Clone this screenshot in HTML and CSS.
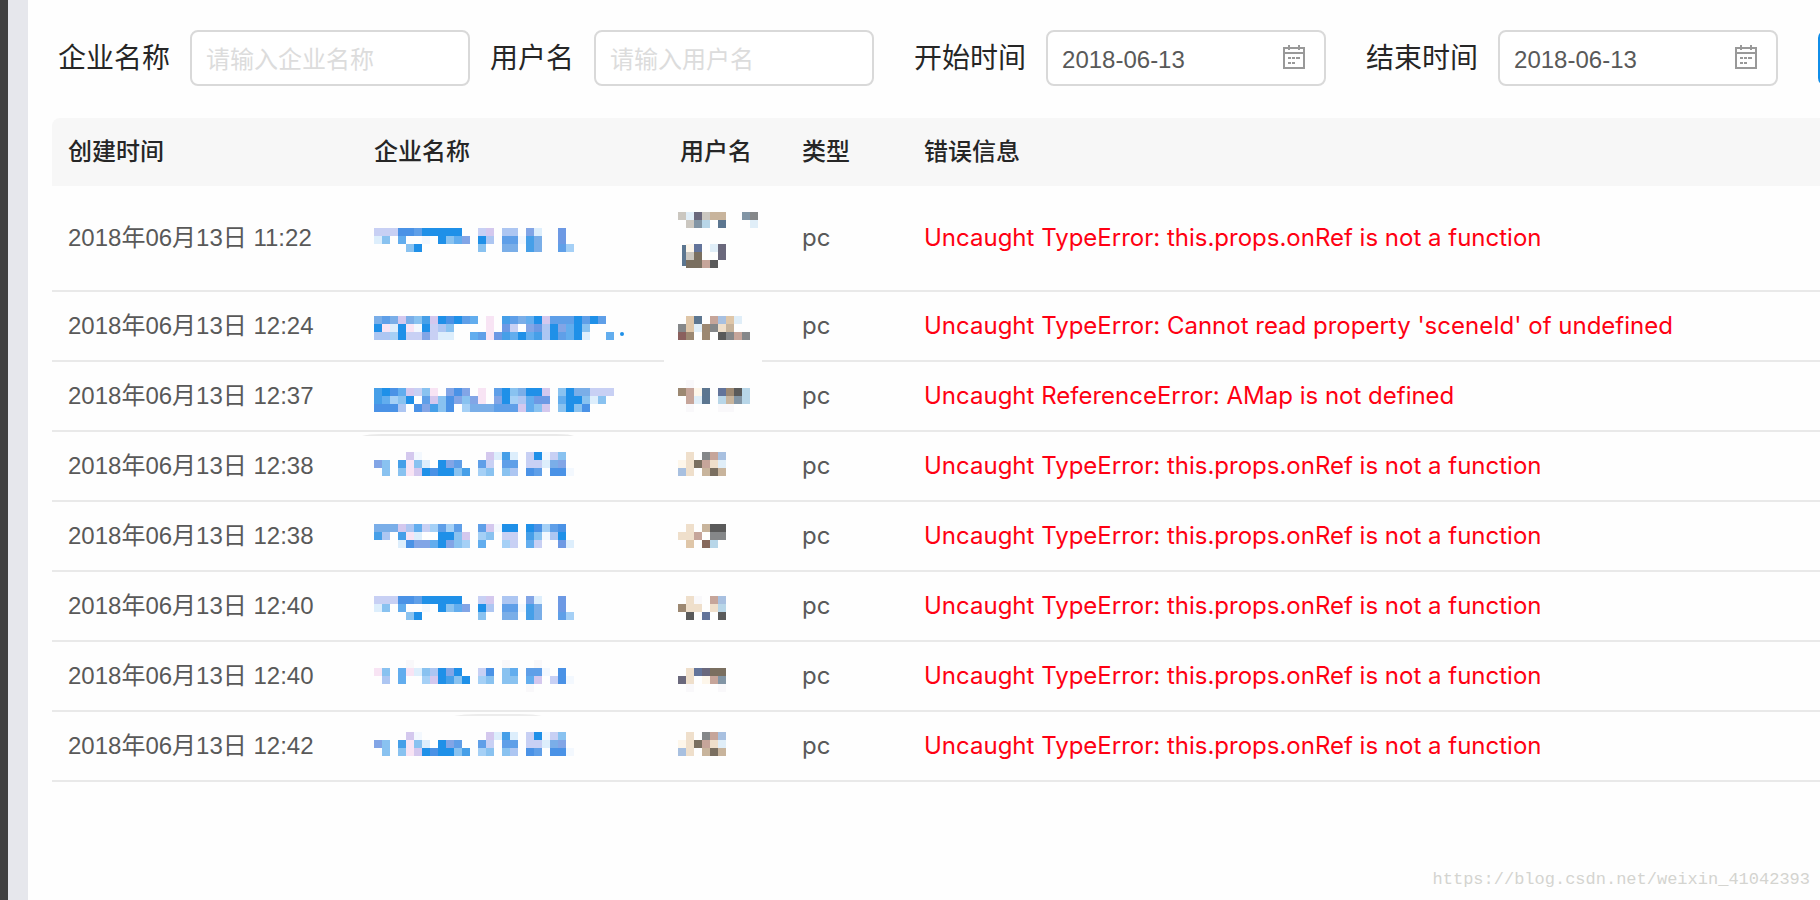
FILE: index.html
```html
<!DOCTYPE html>
<html lang="zh-CN">
<head>
    <meta charset="UTF-8">
    <meta name="viewport" content="width=device-width, initial-scale=1.0">
    <title>错误日志</title>
    <link rel="stylesheet" href="styles.css">
</head>
<body>
    <div class="layout">
        <div class="sidebar"></div>
        <div class="content">
            <form class="filters" id="filterForm">
                <div class="field">
                    <label for="company">企业名称</label>
                    <input type="text" id="company" placeholder="请输入企业名称">
                </div>
                <div class="field">
                    <label for="username">用户名</label>
                    <input type="text" id="username" placeholder="请输入用户名">
                </div>
                <div class="field field-date">
                    <label for="startDate">开始时间</label>
                    <div class="picker">
                        <input type="text" id="startDate" value="2018-06-13">
                        <svg class="calendar" viewBox="0 0 22 24"><path d="M1 3h20v20H1zM6 0v5M16 0v5" /><path class="bar" d="M1 8h20" /><path d="M5 13h3M9 13h3M13 13h4M5 18h3M9 18h3" /></svg>
                    </div>
                </div>
                <div class="field field-date">
                    <label for="endDate">结束时间</label>
                    <div class="picker">
                        <input type="text" id="endDate" value="2018-06-13">
                        <svg class="calendar" viewBox="0 0 22 24"><path d="M1 3h20v20H1zM6 0v5M16 0v5" /><path class="bar" d="M1 8h20" /><path d="M5 13h3M9 13h3M13 13h4M5 18h3M9 18h3" /></svg>
                    </div>
                </div>
                <button type="submit" class="search"></button>
            </form>

            <table class="log">
                <thead>
                    <tr>
                        <th class="col-time">创建时间</th>
                        <th class="col-company">企业名称</th>
                        <th class="col-user">用户名</th>
                        <th class="col-type">类型</th>
                        <th>错误信息</th>
                    </tr>
                </thead>
                <tbody id="logRows"></tbody>
            </table>
        </div>
    </div>
    <div class="watermark">https://blog.csdn.net/weixin_41042393</div>

    <script src="script.js"></script>
</body>
</html>
```

FILE: styles.css
```css
body {
    margin: 0;
    background-color: #fefefe;
    font-family: "Liberation Sans", "Noto Sans CJK SC", sans-serif;
    font-size: 24px;
    color: #595959;
}

.layout {
    display: flex;
    min-height: 100vh;
}

.sidebar {
    flex: none;
    width: 8px;
    background-color: #404040;
    border-right: 20px solid #e6e7ec;
}

.content {
    flex: 1;
    min-width: 0;
    padding: 30px 0 0 24px;
    overflow: hidden;
}

/* Filters */
.filters {
    display: flex;
    gap: 20px;
    padding-left: 6px;
    margin-bottom: 32px;
}

.field {
    display: flex;
    flex: none;
    align-items: center;
    gap: 20px;
}

.field-date,
.search {
    margin-left: 20px;
}

.field label {
    padding-top: 2px;
    font-size: 28px;
    line-height: 54px;
    color: #262626;
}

.field input {
    box-sizing: border-box;
    width: 280px;
    height: 56px;
    padding: 3px 14px 0;
    border: 2px solid #d9d9d9;
    border-radius: 8px;
    background-color: white;
    font: inherit;
    color: #595959;
}

.field input::placeholder {
    color: #dcdcdc;
}

.picker {
    position: relative;
}

.calendar {
    position: absolute;
    top: 15px;
    right: 21px;
    width: 22px;
    height: 24px;
    fill: none;
    stroke: #999999;
    stroke-width: 2;
}

.search {
    flex: none;
    width: 110px;
    height: 56px;
    border: none;
    border-radius: 8px;
    background-color: #108ee9;
}

/* Table */
.log {
    width: 100%;
    table-layout: fixed;
    border-spacing: 0;
}

.log th,
.log td {
    padding: 16px;
    line-height: 36px;
    text-align: left;
    white-space: nowrap;
}

.log th {
    background-color: #f7f7f7;
    font-weight: 500;
    color: #262626;
}

.log th:first-child {
    border-top-left-radius: 8px;
}

.log td {
    border-bottom: 2px solid #e9e9e9;
}

.col-time,
.col-company {
    width: 274px;
}

.col-user,
.col-type {
    width: 90px;
}

.log .type,
.log .message {
    font-family: Inter, sans-serif;
}

.log .message {
    color: #ff0012;
}

.mosaic {
    display: block;
    width: 100%;
    height: 36px;
    overflow: visible;
}

.mosaic.tall {
    height: 72px;
}

.watermark {
    position: absolute;
    right: 10px;
    bottom: 10px;
    font-family: "Liberation Mono", monospace;
    font-size: 17px;
    line-height: 20px;
    color: #d4d4d0;
}
```

FILE: script.js
```js
// Colours of the mosaic cells, lower case for companies, upper case for users
var colors = {
    a: "#1f90e8", b: "#4a92e6", c: "#5f9fe8", d: "#7aaee8", e: "#82a5e6", f: "#89c2f0",
    g: "#adc6f2", h: "#c8d0f4", i: "#ddeefc", j: "#d4c8ee", k: "#f8e4f4", l: "#62adee",
    m: "#469fe8", n: "#f3f8fe", o: "#a5d0f6", p: "#6d99e4",
    A: "#efdfcb", B: "#c8b49c", C: "#9c8872", D: "#7a6f60", E: "#5a5a5a", F: "#858789",
    G: "#c6a59a", H: "#a8c0e0", I: "#5c7690", J: "#e0eef8", K: "#6a687c", L: "#b8d6e8",
    M: "#fdf6ea", N: "#8a605e", O: "#63749a", P: "#86695c", Q: "#8295a5", R: "#cbc7c0",
    S: "#dfc6a8", T: "#f9f8fa"
};

var onRef = "Uncaught TypeError: this.props.onRef is not a function";

var companyA = [8, "hhhbbcaaaaa..hj.gg.ei..p", "if.l..n.afle.ag.ccnmd..p", "....fa.......f..dd.md..co"];
var companyB = [4, "....jn........jimi.hanhf", "ef.mkfi.aec..ch.cc.hhide", ".f.fkjabaafm.of.fg.bc.bbn"];
var userB = [4, ".A.FGH", "MADGAJ", "HA.BDB"];

var logs = [
    {
        time: "2018年06月13日 11:22", message: onRef, tall: true,
        company: companyA,
        user: [10, "RJKRBB..QF", ".RQL.I...J", "", "", ".MO.JK", ".RD..K", ".DDGE"],
        userExtra: '<path d="M2 43h4v21h-4z" fill="#5c7690"/>'
    },
    {
        time: "2018年06月13日 12:24", message: "Uncaught TypeError: Cannot read property 'sceneId' of undefined",
        company: [8, "dcdjdfmjabacl.k.mcdlajcccacac", "akiaknahgf....k.ph.epgaelaf", "ggoahhehii..lckpmlalmgaclai..l"],
        companyExtra: '<circle cx="248" cy="26" r="2" fill="#1f90e8"/>',
        user: [8, ".SI.GHSJ", "FSJCFAB", "NC.C.EFGF"],
        userExtra: '<path d="M-16 51h98v4h-98z" fill="#fefefe"/>'
    },
    {
        time: "2018年06月13日 12:37", message: "Uncaught ReferenceError: AMap is not defined",
        company: [10, "mabljhfk.ebe.k.cafdaaj.faddhhh", "mlofa.cjfbefek.eaoglpp.laafif", "bbbg.bemfb.odddcccjlfj.fafb"],
        user: [2, ".T", "CGMI.OCEL", ".GJI.LBQL", ".T...TT"]
    },
    {
        time: "2018年06月13日 12:38", message: onRef,
        company: companyB,
        companyExtra: '<path d="M-12 -12q6 -2 20 -2h174q14 0 18 2z" fill="#e9e9e9"/>',
        user: userB
    },
    {
        time: "2018年06月13日 12:38", message: onRef,
        company: [6, "dddjglhococ..cjnaa.abocb", "mg.mki..aafj.of.hh.mfnga", "...ibeelaefo.l..oh.lh..pi"],
        user: [6, ".A.BEE", "AAG.FF", ".S.PL"]
    },
    {
        time: "2018年06月13日 12:40", message: onRef,
        company: companyA,
        user: [8, ".AT.GH", "CAA.AL", ".E.O.E"]
    },
    {
        time: "2018年06月13日 12:40", message: onRef,
        company: [2, "....T...........T...T", "kf.lkifgaea..hb.fl.ccn.b", ".g.l..ojamfa.of.ff.lj.hbn", "...................T"],
        user: [10, ".AOKDD", "KA.MGQ", ".T...T"]
    },
    {
        time: "2018年06月13日 12:42", message: onRef,
        company: companyB,
        companyExtra: '<path d="M80 -12q10 -2 24 -2h40q16 0 24 2z" fill="#ececec"/>',
        user: userB
    }
];

// First item is the top offset, the others are lines of 8px cells
function mosaic(lines, left, extra, tall) {
    var rects = "";
    for (var y = 1; y < lines.length; y++) {
        for (var x = 0; x < lines[y].length; x++) {
            var color = colors[lines[y][x]];
            if (color) {
                rects += '<rect x="' + (left + x * 8) + '" y="' + (lines[0] + (y - 1) * 8) +
                    '" width="8" height="8" fill="' + color + '"/>';
            }
        }
    }
    return '<svg class="mosaic' + (tall ? " tall" : "") + '">' + rects + (extra || "") + "</svg>";
}

var html = "";
logs.forEach(function(log) {
    html += "<tr><td>" + log.time + "</td>" +
        "<td>" + mosaic(log.company, 0, log.companyExtra) + "</td>" +
        "<td>" + mosaic(log.user, -2, log.userExtra, log.tall) + "</td>" +
        '<td class="type">pc</td>' +
        '<td class="message">' + log.message + "</td></tr>";
});
document.getElementById("logRows").innerHTML = html;

document.getElementById("filterForm").addEventListener("submit", function(event) {
    event.preventDefault();
});
```
